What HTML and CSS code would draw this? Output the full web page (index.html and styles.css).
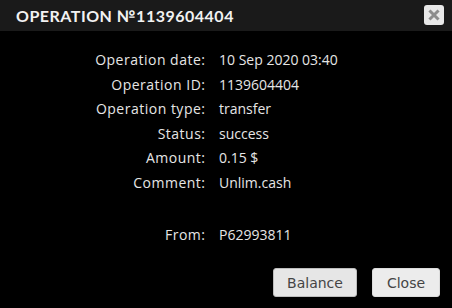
FILE: index.html
```html
<!DOCTYPE html>
<html>
<head>
<meta charset="utf-8">
<link rel="stylesheet" href="styles.css">
</head>
<body>
<div class="dialog">
  <div class="titlebar">
    <span class="title">OPERATION №1139604404</span>
    <button class="xbtn" aria-label="close">
      <svg width="12" height="12" viewBox="0 0 12 12"><path d="M2.5 2.5 L9.5 9.5 M9.5 2.5 L2.5 9.5" stroke="#8c8c8c" stroke-width="3" stroke-linecap="square"/></svg>
    </button>
  </div>
  <div class="content">
    <div class="grid">
      <div class="lbl">Operation date:</div><div class="val">10 Sep 2020 03:40</div>
      <div class="lbl">Operation ID:</div><div class="val">1139604404</div>
      <div class="lbl">Operation type:</div><div class="val">transfer</div>
      <div class="lbl">Status:</div><div class="val">success</div>
      <div class="lbl">Amount:</div><div class="val">0.15 $</div>
      <div class="lbl">Comment:</div><div class="val">Unlim.cash</div>
      <div class="lbl spacer"></div><div class="val spacer"></div>
      <div class="lbl">From:</div><div class="val">P62993811</div>
    </div>
  </div>
  <div class="buttons">
    <button class="btn balance">Balance</button>
    <button class="btn close">Close</button>
  </div>
</div>
</body>
</html>
```
FILE: styles.css
```css
html, body {
  margin: 0;
  padding: 0;
  background: #000;
}
.dialog {
  width: 452px;
  height: 308px;
  background: #000;
  display: flex;
  flex-direction: column;
}
.titlebar {
  height: 31px;
  background: #1a1a1a;
  display: flex;
  align-items: center;
  justify-content: space-between;
  padding: 0 8px 0 16px;
  box-sizing: border-box;
}
.title {
  font-family: "Lato", sans-serif;
  font-weight: 700;
  font-size: 16px;
  color: #f2f2f2;
  letter-spacing: 0.5px;
}
.xbtn {
  width: 20px;
  height: 20px;
  margin: 0;
  padding: 0;
  border: none;
  border-radius: 3px;
  background: #e8e8e8;
  display: flex;
  align-items: center;
  justify-content: center;
  position: relative;
  top: -1px;
}
.content {
  padding-top: 17px;
  flex: 1;
}
.grid {
  display: grid;
  grid-template-columns: 205px auto;
  column-gap: 14px;
  font-family: "Open Sans", sans-serif;
  font-size: 14px;
  color: #e6e6e6;
  line-height: 24.5px;
}
.lbl {
  text-align: right;
  letter-spacing: 0.5px;
  margin-right: -0.5px;
}
.spacer {
  height: 28px;
}
.buttons {
  display: flex;
  justify-content: flex-end;
  gap: 15px;
  padding: 0 12px 11px 0;
}
.btn {
  height: 29px;
  margin: 0;
  border: 1px solid #bdbdbd;
  border-radius: 3px;
  background: #e6e6e6;
  color: #444;
  font-family: "DejaVu Sans", sans-serif;
  font-size: 14px;
  padding: 0;
}
.balance {
  width: 84px;
}
.close {
  width: 68px;
  background: #ececec;
  border-color: #dcdcdc;
}
```
